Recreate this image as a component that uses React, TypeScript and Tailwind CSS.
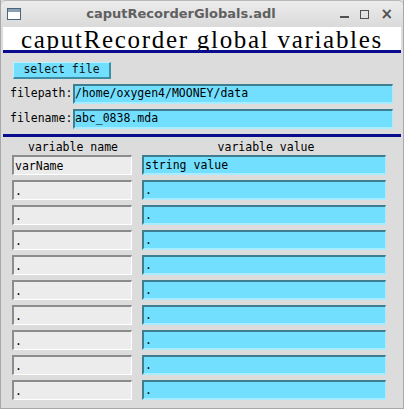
import React from "react"

const mono = { fontFamily: '"DejaVu Sans Mono", "Liberation Mono", monospace' }

// row of name/value fields
function VarRow({ name, value }: { name: string; value: string }) {
  return (
    <div className="flex items-stretch h-[20px] mt-[5px] first:mt-0">
      <div className="ml-[9px] w-[120px] bg-[#ececec] border-t-2 border-l-2 border-[#8c8c8c] border-b border-r border-b-white border-r-white flex items-end pl-[1px] leading-[15px] text-[11.5px] text-black">
        {name}
      </div>
      <div className="ml-[10px] w-[244px] bg-[#73dfff] border-t-2 border-l-2 border-[#3e7e90] border-b-2 border-r border-b-[#a9ecff] border-r-[#a9ecff] flex items-end pl-[1px] leading-[15px] text-[11.5px] text-black">
        {value}
      </div>
    </div>
  )
}

export default function App() {
  const rows = [
    { name: "varName", value: "string value" },
    ...Array.from({ length: 9 }, () => ({ name: ".", value: "." })),
  ]

  return (
    <div className="w-[404px] h-[409px] bg-[#dcdcdc] flex flex-col overflow-hidden border-x border-b border-[#a8a8a8]">
      {/* заголовок окна */}
      <div className="h-[27px] shrink-0 flex items-center bg-gradient-to-b from-[#ececec] to-[#dadada] relative border-t border-[#b8b8b8] rounded-t-[5px]">
        <div className="ml-[6px] w-[14px] h-[12px] border border-[#4c6478] bg-white flex flex-col">
          <div className="h-[3px] bg-[#8aa0b4]" />
        </div>
        <div
          className="absolute left-0 right-[42px] text-center text-[13px] font-bold text-[#606060]"
          style={{ fontFamily: '"DejaVu Sans", sans-serif' }}
        >
          caputRecorderGlobals.adl
        </div>
        <div
          className="ml-auto mr-[10px] flex items-center gap-[11px] text-[#505050] text-[13px] relative"
          style={{ fontFamily: '"DejaVu Sans", sans-serif' }}
        >
          <span className="w-[9px] h-[2px] bg-[#505050] mt-[6px]" />
          <span className="w-[9px] h-[9px] border-[1.5px] border-[#505050]" />
          <span className="text-[15px] font-bold leading-none">×</span>
        </div>
      </div>

      <div className="flex flex-col px-[2px]" style={mono}>
        {/* шапка */}
        <div
          className="bg-white h-[23px] flex items-center justify-center text-black text-[25px] leading-none tracking-[1.7px] pt-[2px]"
          style={{ fontFamily: '"Liberation Serif", "DejaVu Serif", serif' }}
        >
          caputRecorder global variables
        </div>
        <div className="h-[3px] bg-[#0b0b8e]" />

        {/* выбор файла */}
        <div className="mt-[9px] ml-[10px] w-[98px] h-[17px] bg-[#73dfff] border-t border-l border-[#b8f3ff] border-b-2 border-r-2 border-b-[#3e8ea4] border-r-[#3e8ea4] flex items-center justify-center text-[11.5px] text-[#111]">
          select file
        </div>

        <div className="mt-[5px] flex items-center h-[20px]">
          <span className="ml-[7px] w-[63px] text-[11.5px] text-black">filepath:</span>
          <div className="w-[320px] h-[20px] bg-[#73dfff] border-t-2 border-l-2 border-[#3e7e90] border-b-2 border-r border-b-[#a9ecff] border-r-[#a9ecff] flex items-center text-[11.5px] text-black">
            /home/oxygen4/MOONEY/data
          </div>
        </div>

        <div className="mt-[5px] flex items-center h-[20px]">
          <span className="ml-[7px] w-[63px] text-[11.5px] text-black">filename:</span>
          <div className="w-[320px] h-[20px] bg-[#73dfff] border-t-2 border-l-2 border-[#3e7e90] border-b-2 border-r border-b-[#a9ecff] border-r-[#a9ecff] flex items-center text-[11.5px] text-black">
            abc_0838.mda
          </div>
        </div>

        <div className="mt-[5px] h-[3px] bg-[#0b0b8e]" />

        {/* таблица переменных */}
        <div className="flex h-[17px] items-end text-[11.5px] text-black leading-[14px]">
          <span className="w-[140px] text-center">variable name</span>
          <span className="w-[246px] text-center">variable value</span>
        </div>

        <div className="mt-[1px] flex flex-col">
          {rows.map((r, i) => (
            <VarRow key={i} name={r.name} value={r.value} />
          ))}
        </div>
      </div>
    </div>
  )
}
